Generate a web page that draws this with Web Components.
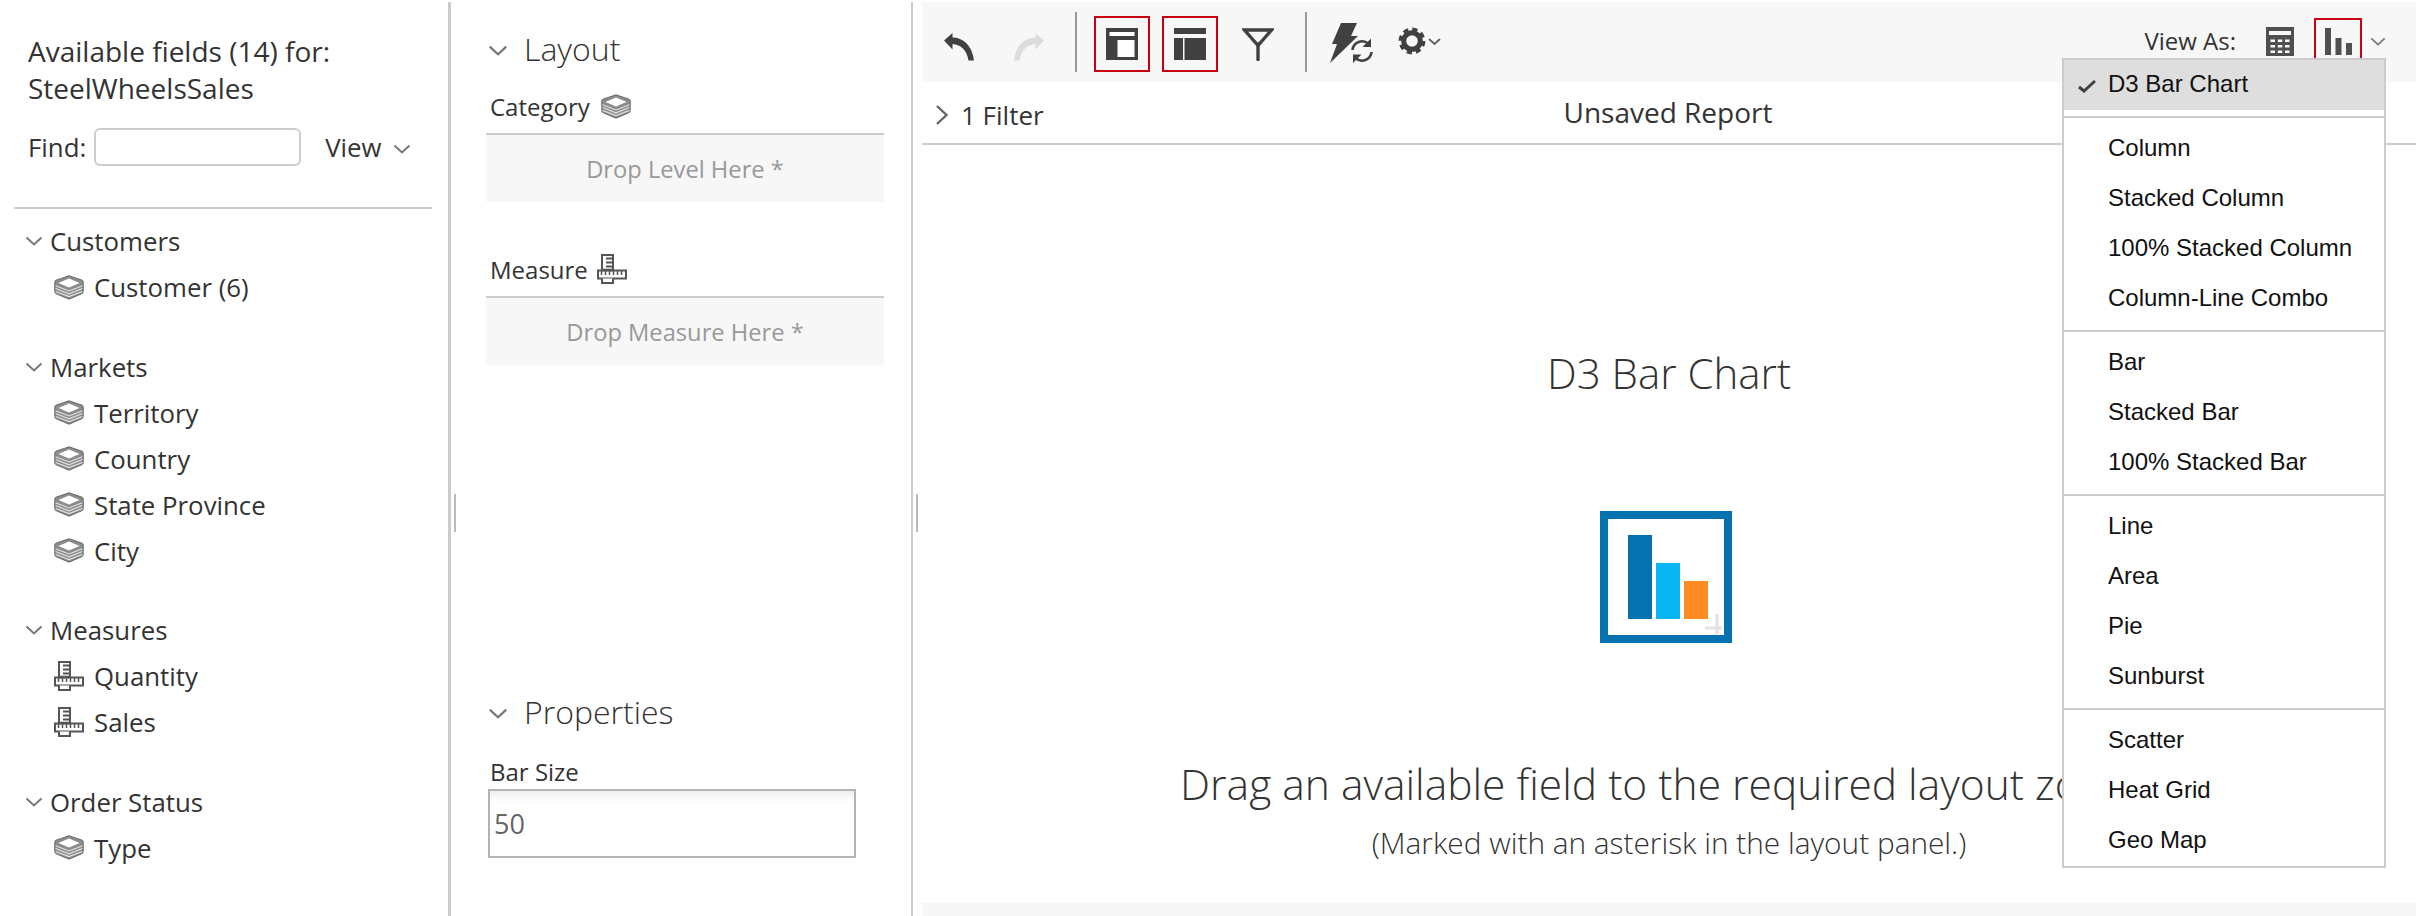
<!DOCTYPE html>
<html lang="en">
<head>
<meta charset="utf-8">
<title>Unsaved Report</title>
<style>
  html, body { margin: 0; height: 916px; overflow: hidden; background: #fff; }
  body { font-family: "Open Sans", "Liberation Sans", sans-serif; color: #333; }
</style>
</head>
<body>
<analyzer-app>
  <field-panel slot="fields" title-text="SteelWheelsSales" count="14">
    <field-group label="Customers">
      <field-item>Customer (6)</field-item>
    </field-group>
    <field-group label="Markets">
      <field-item>Territory</field-item>
      <field-item>Country</field-item>
      <field-item>State Province</field-item>
      <field-item>City</field-item>
    </field-group>
    <field-group label="Measures">
      <field-item icon="measure">Quantity</field-item>
      <field-item icon="measure">Sales</field-item>
    </field-group>
    <field-group label="Order Status">
      <field-item>Type</field-item>
    </field-group>
  </field-panel>
  <layout-panel slot="layout"></layout-panel>
  <report-view slot="report"></report-view>
</analyzer-app>

<script>
const ICONS = {
  chevronDown: `<svg viewBox="0 0 18 10" fill="none" stroke="#777" stroke-width="2"><path d="M1.5 1.5 9 8.5l7.5-7"/></svg>`,
  chevronRight: `<svg viewBox="0 0 14 22" fill="none" stroke="#666" stroke-width="2.4"><path d="M2 2l9.5 9L2 20"/></svg>`,
  level: `<svg viewBox="0 0 30 25" fill="none">
    <path fill="#8c8c8c" stroke="#666" d="M15 .8 28 5.2c1 .4 1.2 1 1.2 2v9.4c0 1-.4 1.6-1.2 2L15 24.2 2 18.6c-.8-.4-1.2-1-1.2-2V7.2c0-1 .2-1.6 1.2-2z"/>
    <path fill="#fff" d="M15 3.4 25.6 8 15 12.4 4.4 8z"/>
    <path stroke="#e4e4e4" stroke-width="1.1" d="M1.600 10.800 15 16l13.400-5.200M1.600 13.600 15 18.800l13.400-5.200M1.600 16.400 15 21.600l13.400-5.200"/>
  </svg>`,
  measure: `<svg viewBox="0 0 30 30" fill="none" stroke="#555">
    <path stroke-width="2" fill="#fff" d="M5 1h11v16H5z"/>
    <path stroke-width="2" d="M9 4.500h7M9 8.500h7M9 12.500h7"/>
    <path stroke-width="2" fill="#fff" d="M1 16.500h28v8H1z"/>
    <path stroke-width="1.500" d="M4.500 17v4M8.500 17v4M12.500 17v4M16.500 17v4M20.500 17v4M24.500 17v4"/>
    <path stroke-width="2" fill="#fff" d="M5 24.500V29h11v-4.500"/>
    <path stroke-width="2.500" d="M5 16h11"/>
  </svg>`,
  undo: `<svg viewBox="0 0 33 28" fill="#404040"><path d="M1 7.500 9.500 0v4.500C20 4.500 29 12 31 27.500h-5.500C24 17.500 18 11.500 9.500 11v5.500z"/></svg>`,
  redo: `<svg viewBox="0 0 33 28" fill="#dcdcdc"><path d="M32 7.500 23.500 0v4.500C13 4.500 4 12 2 27.500h5.500C9 17.500 15 11.500 23.500 11v5.500z"/></svg>`,
  layoutOne: `<svg viewBox="0 0 32 32"><path fill="#404040" d="M0 0h32v32H0z"/><path fill="#fff" d="M3.500 4h25v4h-25zM11.500 12h17v17h-17z"/></svg>`,
  layoutTwo: `<svg viewBox="0 0 32 32" fill="#404040"><path d="M0 0h32v6H0zM0 10h9v22H0zM10.500 10H32v22H10.500z"/></svg>`,
  filter: `<svg viewBox="0 0 32 33" fill="none" stroke="#404040" stroke-width="3.400"><path d="M2.500 2h27L16 17.500z"/><path d="M16 16v15.500" stroke-linecap="round"/></svg>`,
  refresh: `<svg viewBox="0 0 43 40" fill="none">
    <path fill="#404040" d="M11 0h16l-6 13h7L0 40l7-19H2z"/>
    <circle cx="32" cy="28" r="12.500" fill="#f7f7f7"/>
    <path stroke="#404040" stroke-width="2.600" d="M22.500 27a9.500 9.500 0 0 1 16-6M41.500 29a9.500 9.500 0 0 1-16 6"/>
    <path fill="#404040" d="M41 15.500v8.500h-8.500zM23 40v-8.500h8.500z"/>
  </svg>`,
  gear: `<svg viewBox="0 0 44 28" fill="none" stroke="#404040">
    <circle cx="14" cy="14" r="8.300" stroke-width="5"/>
    <circle cx="14" cy="14" r="11.600" stroke-width="3.600" stroke-dasharray="5.100 4"/>
    <path stroke="#666" stroke-width="2" d="M31 12l5.500 5 5.500-5"/>
  </svg>`,
  table: `<svg viewBox="0 0 28 29"><path fill="#505050" d="M0 0h28v29H0z"/><path fill="#f7f7f7" d="M3 4h22v4H3zM4.500 12.500h4.500v2.500H4.500zM11.800 12.500h4.500v2.500h-4.500zM19 12.500h4.500v2.500H19zM4.500 18h4.500v2.500H4.500zM11.800 18h4.500v2.500h-4.500zM19 18h4.500v2.500H19zM4.500 23.500h4.500V26H4.500zM11.800 23.500h4.500V26h-4.500zM19 23.500h4.500V26H19z"/></svg>`,
  bars: `<svg viewBox="0 0 27 27" fill="#505050"><path d="M0 0h6v27H0zM10.500 10h6v17h-6zM21 15h6v12h-6z"/></svg>`,
  check: `<svg viewBox="0 0 18 14" fill="none" stroke="#404040" stroke-width="3"><path d="M1 8l5 4L17 2"/></svg>`,
  chart: `<svg viewBox="0 0 132 132">
    <path fill="#0672b0" d="M0 0h132v132H0z"/><path fill="#fff" d="M8 8h116v116H8z"/>
    <path fill="#0672b0" d="M28 24h24v84H28z"/><path fill="#0bb6f4" d="M56 52h24v56H56z"/><path fill="#ff8c21" d="M84 70h24v38H84z"/>
    <path fill="none" stroke="#e2e2e2" stroke-width="3" d="M105 117h17M117 103v20"/>
  </svg>`
};

function define(name, html) {
  customElements.define(name, class extends HTMLElement {
    constructor() {
      super();
      this.attachShadow({ mode: "open" });
    }
    connectedCallback() {
      this.shadowRoot.innerHTML = typeof html === "function" ? html(this) : html;
    }
  });
}

define("pa-icon", (el) => `<style>:host{display:inline-flex;flex:none}svg{display:block;width:100%;height:100%}</style>${ICONS[el.getAttribute("name")]}`);

define("analyzer-app", `
  <style>
    :host { display: flex; height: 914px; padding-top: 2px; position: relative; }
    .left { width: 448px; flex: none; }
    .mid { width: 460px; flex: none; }
    .right { flex: 1; min-width: 0; padding-left: 9px; }
    .split { flex: none; width: 2px; background: #ccc; position: relative; }
    .split.first { width: 3px; }
    /* grip lies over the panel beside the divider */
    .split i { position: absolute; left: 5px; top: 492px; width: 2px; height: 38px; background: #bbb; }
    .split.first i { left: 6px; }
  </style>
  <div class="left"><slot name="fields"></slot></div>
  <div class="split first"><i></i></div>
  <div class="mid"><slot name="layout"></slot></div>
  <div class="split"><i></i></div>
  <div class="right"><slot name="report"></slot></div>
`);

define("field-panel", (el) => `
  <style>
    :host { display: block; font-size: 25.8px; }
    h2 { margin: 0; padding: 31px 0 0 28px; font-weight: 400; font-size: 28px; line-height: 37px; color: #333; }
    .find { display: flex; align-items: center; height: 38px; margin: 21px 0 0 28px; }
    .box { width: 207px; height: 38px; box-sizing: border-box; margin-left: 8px; border: 2px solid #ccc; border-radius: 6px; background: #fff; }
    .view { margin-left: 24px; display: flex; align-items: center; }
    .view pa-icon { width: 18px; height: 10px; margin: 3px 0 0 11px; }
    hr { height: 2px; border: 0; margin: 41px 16px 9px 14px; background: #ccc; }
  </style>
  <h2>Available fields (${el.getAttribute("count")}) for:<br>${el.getAttribute("title-text")}</h2>
  <div class="find">Find:<div class="box"></div><span class="view">View<pa-icon name="chevronDown"></pa-icon></span></div>
  <hr>
  <slot></slot>
`);

define("field-group", (el) => `
  <style>
    :host { display: block; margin-bottom: 33.6px; }
    .head { display: flex; align-items: center; height: 46px; padding-left: 25px; }
    .head pa-icon { width: 18px; height: 10px; margin-right: 7px; }
  </style>
  <div class="head"><pa-icon name="chevronDown"></pa-icon>${el.getAttribute("label")}</div>
  <slot></slot>
`);

define("field-item", (el) => {
  const icon = el.getAttribute("icon") || "level";
  return `
  <style>
    :host { display: flex; align-items: center; height: 46px; padding-left: 54px; }
    pa-icon { width: 30px; height: ${icon === "measure" ? 30 : 25}px; margin-right: 10px; }
  </style>
  <pa-icon name="${icon}"></pa-icon><slot></slot>
`;
});

define("panel-head", `
  <style>
    :host { display: flex; align-items: center; height: 44px; font-size: 32px; font-weight: 300; color: #333; }
    pa-icon { width: 20px; height: 11px; margin: 4px 16px 0 2px; }
  </style>
  <pa-icon name="chevronDown"></pa-icon><slot></slot>
`);

define("drop-zone", (el) => {
  const icon = el.getAttribute("icon");
  return `
  <style>
    :host { display: block; font-size: 24px; }
    .label { display: flex; align-items: center; height: 46px; padding: 0 0 4px 4px; color: #333; }
    .label pa-icon { margin-left: ${icon === "measure" ? 9 : 11}px; width: 30px; height: ${icon === "measure" ? 30 : 25}px; }
    .zone { height: 69px; border-top: 2px solid #ccc; box-sizing: border-box; background: #f7f7f7; color: #999; font-size: 23.7px; display: flex; align-items: center; justify-content: center; }
  </style>
  <div class="label">${el.getAttribute("label")}<pa-icon name="${icon}"></pa-icon></div>
  <div class="zone">${el.getAttribute("hint")}</div>
`;
});

define("layout-panel", `
  <style>
    :host { display: block; padding: 24px 27px 0 35px; }
    drop-zone + drop-zone { margin-top: 44px; }
    panel-head.first { margin-bottom: 13px; }
    .props { margin-top: 324px; }
    .size { font-size: 24px; color: #333; padding-left: 4px; line-height: 34px; margin-top: 22px; }
    .input { width: 368px; height: 69px; box-sizing: border-box; margin: 0 0 0 2px; padding: 0 0 0 4px; display: flex; align-items: center; border: 2px solid #b3b3b3; background: linear-gradient(#efefef, #fff 12px); font-size: 27px; color: #666; }
  </style>
  <panel-head class="first">Layout</panel-head>
  <drop-zone label="Category" icon="level" hint="Drop Level Here *"></drop-zone>
  <drop-zone label="Measure" icon="measure" hint="Drop Measure Here *"></drop-zone>
  <panel-head class="props">Properties</panel-head>
  <div class="size">Bar Size</div>
  <div class="input">50</div>
`);

define("report-toolbar", `
  <style>
    :host { display: flex; align-items: flex-start; height: 80px; background: #f7f7f7; padding-right: 30px; }
    .sep { width: 2px; height: 60px; margin-top: 10px; background: #999; flex: none; }
    .box { width: 56px; height: 56px; box-sizing: border-box; margin-top: 14px; border: 2px solid #c8000f; display: flex; align-items: center; justify-content: center; flex: none; }
    .box pa-icon { width: 32px; height: 32px; }
    .right { display: flex; align-items: flex-start; margin-left: auto; }
    .as { font-size: 24px; color: #333; line-height: 36px; margin-top: 21px; }
    .active { width: 48px; height: 56px; box-sizing: border-box; margin: 16px 0 0 20px; border: 2px solid #c8000f; display: flex; justify-content: center; padding-top: 8px; }
  </style>
  <pa-icon name="undo" style="width:33px;height:28px;margin:31px 0 0 21px"></pa-icon>
  <pa-icon name="redo" style="width:33px;height:28px;margin:31px 0 0 36px"></pa-icon>
  <div class="sep" style="margin-left:30px"></div>
  <div class="box" style="margin-left:17px"><pa-icon name="layoutOne"></pa-icon></div>
  <div class="box" style="margin-left:12px"><pa-icon name="layoutTwo"></pa-icon></div>
  <pa-icon name="filter" style="width:32px;height:33px;margin:26px 0 0 24px"></pa-icon>
  <div class="sep" style="margin-left:31px"></div>
  <pa-icon name="refresh" style="width:43px;height:40px;margin:21px 0 0 23px"></pa-icon>
  <pa-icon name="gear" style="width:44px;height:28px;margin:25px 0 0 25px"></pa-icon>
  <div class="right">
    <span class="as">View As:</span>
    <pa-icon name="table" style="width:28px;height:29px;margin:25px 0 0 30px"></pa-icon>
    <div class="active"><pa-icon name="bars" style="width:27px;height:27px"></pa-icon></div>
    <pa-icon name="chevronDown" style="width:16px;height:9px;margin:35px 0 0 8px"></pa-icon>
  </div>
`);

define("menu-item", (el) => `
  <style>
    :host { display: flex; align-items: center; height: 50px; box-sizing: border-box; padding: 0 0 3px 44px; position: relative; }
    :host([selected]) { background: #dedede; }
    pa-icon { position: absolute; left: 14px; top: 19px; width: 18px; height: 14px; }
  </style>
  ${el.hasAttribute("selected") ? `<pa-icon name="check"></pa-icon>` : ""}<slot></slot>
`);

define("menu-sep", `<style>:host{display:block;height:2px;margin:6px 0;background:#ccc}</style>`);

define("view-menu", `
  <style>
    :host { display: block; position: absolute; top: 58px; right: 30px; width: 324px; box-sizing: border-box; z-index: 5; background: #fff; border: 2px solid #ccc; font-family: "Liberation Sans", Arial, sans-serif; font-size: 24px; color: #111; }
  </style>
  <menu-item selected>D3 Bar Chart</menu-item>
  <menu-sep></menu-sep>
  <menu-item>Column</menu-item>
  <menu-item>Stacked Column</menu-item>
  <menu-item>100% Stacked Column</menu-item>
  <menu-item>Column-Line Combo</menu-item>
  <menu-sep></menu-sep>
  <menu-item>Bar</menu-item>
  <menu-item>Stacked Bar</menu-item>
  <menu-item>100% Stacked Bar</menu-item>
  <menu-sep></menu-sep>
  <menu-item>Line</menu-item>
  <menu-item>Area</menu-item>
  <menu-item>Pie</menu-item>
  <menu-item>Sunburst</menu-item>
  <menu-sep></menu-sep>
  <menu-item>Scatter</menu-item>
  <menu-item>Heat Grid</menu-item>
  <menu-item>Geo Map</menu-item>
`);

define("report-view", `
  <style>
    :host { display: flex; flex-direction: column; height: 914px; }
    .bar { display: grid; grid-template-columns: 1fr auto 1fr; align-items: center; height: 61px; border-bottom: 2px solid #ccc; flex: none; }
    .filter { display: flex; align-items: center; padding: 4px 0 0 13px; font-size: 26px; }
    .filter pa-icon { width: 14px; height: 22px; margin-right: 12px; }
    .title { font-size: 28px; color: #333; padding: 0 2px 2px 0; }
    .canvas { flex: 1; display: flex; flex-direction: column; align-items: center; font-weight: 300; white-space: nowrap; }
    .type { font-size: 42px; line-height: 60px; margin-top: 198px; }
    .canvas pa-icon { width: 132px; height: 132px; margin: 108px 6px 0 0; }
    .drag { font-size: 42.5px; line-height: 60px; margin-top: 111px; }
    .mark { font-size: 29.8px; line-height: 44px; margin-top: 7px; }
    .foot { height: 13px; background: #f7f7f7; flex: none; }
  </style>
  <report-toolbar></report-toolbar>
  <div class="bar">
    <div class="filter"><pa-icon name="chevronRight"></pa-icon>1 Filter</div>
    <div class="title">Unsaved Report</div>
    <div></div>
  </div>
  <div class="canvas">
    <div class="type">D3 Bar Chart</div>
    <pa-icon name="chart"></pa-icon>
    <div class="drag">Drag an available field to the required layout zones.</div>
    <div class="mark">(Marked with an asterisk in the layout panel.)</div>
  </div>
  <div class="foot"></div>
  <view-menu></view-menu>
`);
</script>
</body>
</html>
